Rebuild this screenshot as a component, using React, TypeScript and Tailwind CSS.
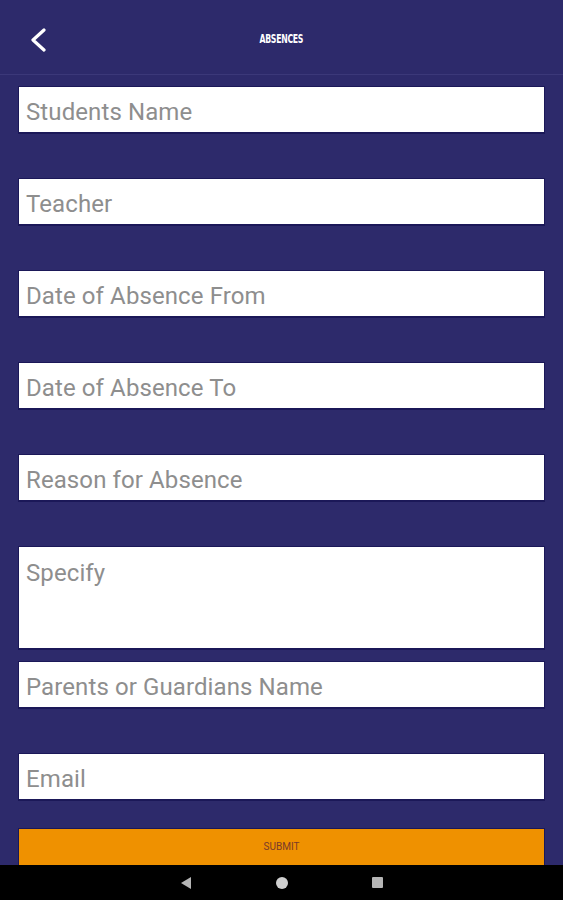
import React from "react";

const Field = ({ label, className = "" }: { label: string; className?: string }) => (
  <div
    className={`bg-white border border-[#1b1858] border-b-2 flex pl-[7px] text-[24px] tracking-[0.1px] text-[#8e8e8e] ${className}`}
    style={{ fontFamily: "Roboto, sans-serif" }}
  >
    {label}
  </div>
);

export default function App() {
  return (
    <div className="w-[563px] h-[900px] bg-[#2d2a6b] flex flex-col overflow-hidden">
      <div className="h-[75px] border-b border-[#3b3879] flex items-center relative shrink-0">
        <svg className="absolute left-[29px] top-[28px]" width="18" height="24" viewBox="0 0 18 24">
          <path d="M15 2 L4 12 L15 22" stroke="white" strokeWidth="3.2" fill="none" strokeLinecap="round" strokeLinejoin="round" />
        </svg>
        <div
          className="w-full text-center text-white text-[12px] font-bold tracking-[-0.4px] pt-[3px]"
          style={{ fontFamily: "'DejaVu Sans Condensed', 'DejaVu Sans', sans-serif", fontStretch: "condensed" }}
        >
          <span className="inline-block scale-x-[0.72]">ABSENCES</span>
        </div>
      </div>
      <div className="flex-1 flex flex-col px-[18px] pt-[11px]">
        <Field label="Students Name" className="h-[48px] items-center pt-[5px] mb-[44px]" />
        <Field label="Teacher" className="h-[48px] items-center pt-[5px] mb-[44px]" />
        <Field label="Date of Absence From" className="h-[48px] items-center pt-[5px] mb-[44px]" />
        <Field label="Date of Absence To" className="h-[48px] items-center pt-[5px] mb-[44px]" />
        <Field label="Reason for Absence" className="h-[48px] items-center pt-[5px] mb-[44px]" />
        <Field label="Specify" className="h-[104px] items-start pt-[8px] mb-[11px]" />
        <Field label="Parents or Guardians Name" className="h-[48px] items-center pt-[5px] mb-[44px]" />
        <Field label="Email" className="h-[48px] items-center pt-[5px] mb-[27px]" />
        <div
          className="h-[37px] bg-[#ef9100] border border-[#1b1858] border-b-0 flex items-center justify-center text-[10px] text-[#7a3a2a] pb-[2px]"
          style={{ fontFamily: "Roboto, sans-serif" }}
        >
          SUBMIT
        </div>
      </div>
      <div className="h-[35px] bg-black flex items-center justify-center shrink-0">
        <div className="flex items-center gap-[84px]">
          <svg width="12" height="14" viewBox="0 0 12 14">
            <path d="M11 1 L11 13 L1 7 Z" fill="#b5b5b5" />
          </svg>
          <div className="w-[12px] h-[12px] rounded-full bg-[#d0d0d0]" />
          <div className="w-[11px] h-[11px] bg-[#b5b5b5] rounded-[1px]" />
        </div>
      </div>
    </div>
  );
}
